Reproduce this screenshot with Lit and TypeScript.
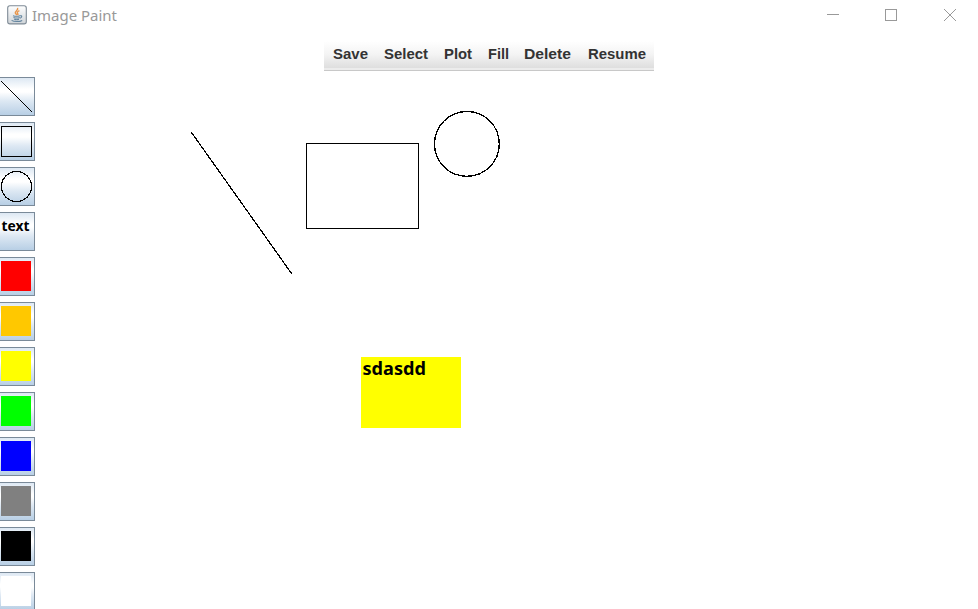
import { LitElement, html, svg, css } from "lit";
import { customElement } from "lit/decorators.js";

const COLORS = ["#ff0000", "#ffc800", "#ffff00", "#00ff00", "#0000ff", "#808080", "#000000", "#ffffff"];

const MENU: { label: string; x: number; width: number }[] = [
  { label: "Save", x: 9, width: 35 },
  { label: "Select", x: 60, width: 44 },
  { label: "Plot", x: 120, width: 28 },
  { label: "Fill", x: 164, width: 21 },
  { label: "Delete", x: 200, width: 47 },
  { label: "Resume", x: 264, width: 58 },
];

const TOOLS = [
  svg`<path d="M1 4L32.2 35.2" />`,
  svg`<rect x="1.5" y="4.5" width="30" height="30" />`,
  svg`<circle cx="16.5" cy="19.5" r="15" stroke-width="1.3" />`,
  svg`<text class="label" x="1.5" y="19" textLength="28" lengthAdjust="spacingAndGlyphs">text</text>`,
];

@customElement("paint-tools")
class PaintTools extends LitElement {
  static styles = css`
    :host { display: flex; flex-direction: column; gap: 6px; width: 35px; }
    .tool {
      flex: none; box-sizing: border-box; height: 39px; width: 35px;
      border: 1px solid #7a8a99; border-left: 0;
      background: linear-gradient(#dde8f3 0, #fff 30%, #fff 38%, #dde8f3 62%, #b8cfe5 100%);
    }
    svg { display: block; width: 35px; height: 39px; margin-top: -1px; fill: none; stroke: #000; shape-rendering: crispEdges; }
    .label { font: bold 13.5px "Noto Sans", "Open Sans", sans-serif; fill: #000; stroke: none; }
    .swatch { width: 30px; height: 30px; margin: 3px 0 0 1px; }
  `;
  render() {
    return html`
      ${TOOLS.map((t) => html`<div class="tool"><svg viewBox="0 0 35 39">${t}</svg></div>`)}
      ${COLORS.map((c) => html`<div class="tool"><div class="swatch" style="background:${c}"></div></div>`)}
    `;
  }
}

@customElement("app-root")
class AppRoot extends LitElement {
  static styles = css`
    :host { display: flex; flex-direction: column; width: 978px; height: 609px; overflow: hidden; background: #fff; }
    .titlebar { display: flex; align-items: center; height: 32px; flex: none; }
    .titlebar svg { display: block; }
    .java { margin: -2px 0 0 7px; }
    .title { flex: 1; height: 32px; }
    .title text { font: 15.3px "Noto Sans", "Open Sans", sans-serif; fill: #999; }
    .controls { width: 168px; height: 32px; fill: none; stroke: #999; }
    .menubar { margin: 9px 0 0 324px; width: 330px; height: 30px; flex: none; }
    .menubar {
      box-sizing: border-box; border-bottom: 1px solid #c8c8c8;
      background: linear-gradient(#fff 0, #f4f4f4 45%, #dedede 27px, #ececec 27px, #ececec 100%);
    }
    .menubar svg { display: block; width: 330px; height: 29px; }
    .menubar text { font: bold 15px "Liberation Sans", Arial, sans-serif; fill: #333; }
    .body { display: flex; flex: none; height: 532px; margin-top: 6px; }
    .canvas { display: block; width: 943px; height: 532px; fill: none; stroke: #000; shape-rendering: crispEdges; }
    .note { fill: #ff0; stroke: none; }
    .caption { font: bold 17.5px "Noto Sans", "Open Sans", sans-serif; fill: #000; stroke: none; }
  `;
  render() {
    return html`
      <div class="titlebar">
        <svg class="java" width="20" height="20" viewBox="0 0 20 20" fill="none">
          <defs>
            <linearGradient id="face" x2="0" y2="1">
              <stop stop-color="#fff" /><stop offset="1" stop-color="#cfd4d8" />
            </linearGradient>
          </defs>
          <rect x=".7" y=".7" width="18.6" height="18.2" rx="2.2" fill="url(#face)" stroke="#7f8b96" stroke-width="1.1" />
          <path d="M10.5 2.8C12 5 7.6 6 8.3 8c.3.9 1.2 1.1 1.5 2.1M12.4 5.6c-2.2 1-2.6 2-1.6 3.1.4.5.2 1-.2 1.4" stroke="#e8954a" stroke-width="1.4" />
          <path d="M6 10.7c2 .6 5 .6 7 0M6.5 12.5c2 .7 4.4.7 6.2 0M7.2 14.2c1.6.6 3.4.6 4.8 0M13 10.8c2.4-.6 2.3 1.8-.1 2.5M4.6 15.4c2.5 1.6 8 1.5 10.6 0" stroke="#64859f" stroke-width="1.1" />
        </svg>
        <svg class="title" width="700" height="32">
          <text x="5" y="21" textLength="85" lengthAdjust="spacingAndGlyphs">Image Paint</text>
        </svg>
        <svg class="controls" viewBox="0 0 168 32">
          <path d="M17 14.5H29M75.5 9.5H86.5V20.5H75.5Z" shape-rendering="crispEdges" />
          <path d="M134 9L146 21M146 9L134 21" />
        </svg>
      </div>
      <div class="menubar">
        <svg>
          ${MENU.map((m) => svg`<text x=${m.x} y="18" textLength=${m.width} lengthAdjust="spacingAndGlyphs">${m.label}</text>`)}
        </svg>
      </div>
      <div class="body">
        <paint-tools></paint-tools>
        <svg class="canvas" viewBox="35 77 943 532">
          <path d="M191.3 132.2L291.9 274" stroke-width="1.25" />
          <rect x="306.5" y="143.5" width="112" height="85" />
          <circle cx="466.9" cy="143.9" r="32.4" stroke-width="1.3" />
          <rect class="note" x="361" y="357" width="100" height="71" />
          <text class="caption" x="362.5" y="375" textLength="63.5" lengthAdjust="spacingAndGlyphs">sdasdd</text>
        </svg>
      </div>
    `;
  }
}
